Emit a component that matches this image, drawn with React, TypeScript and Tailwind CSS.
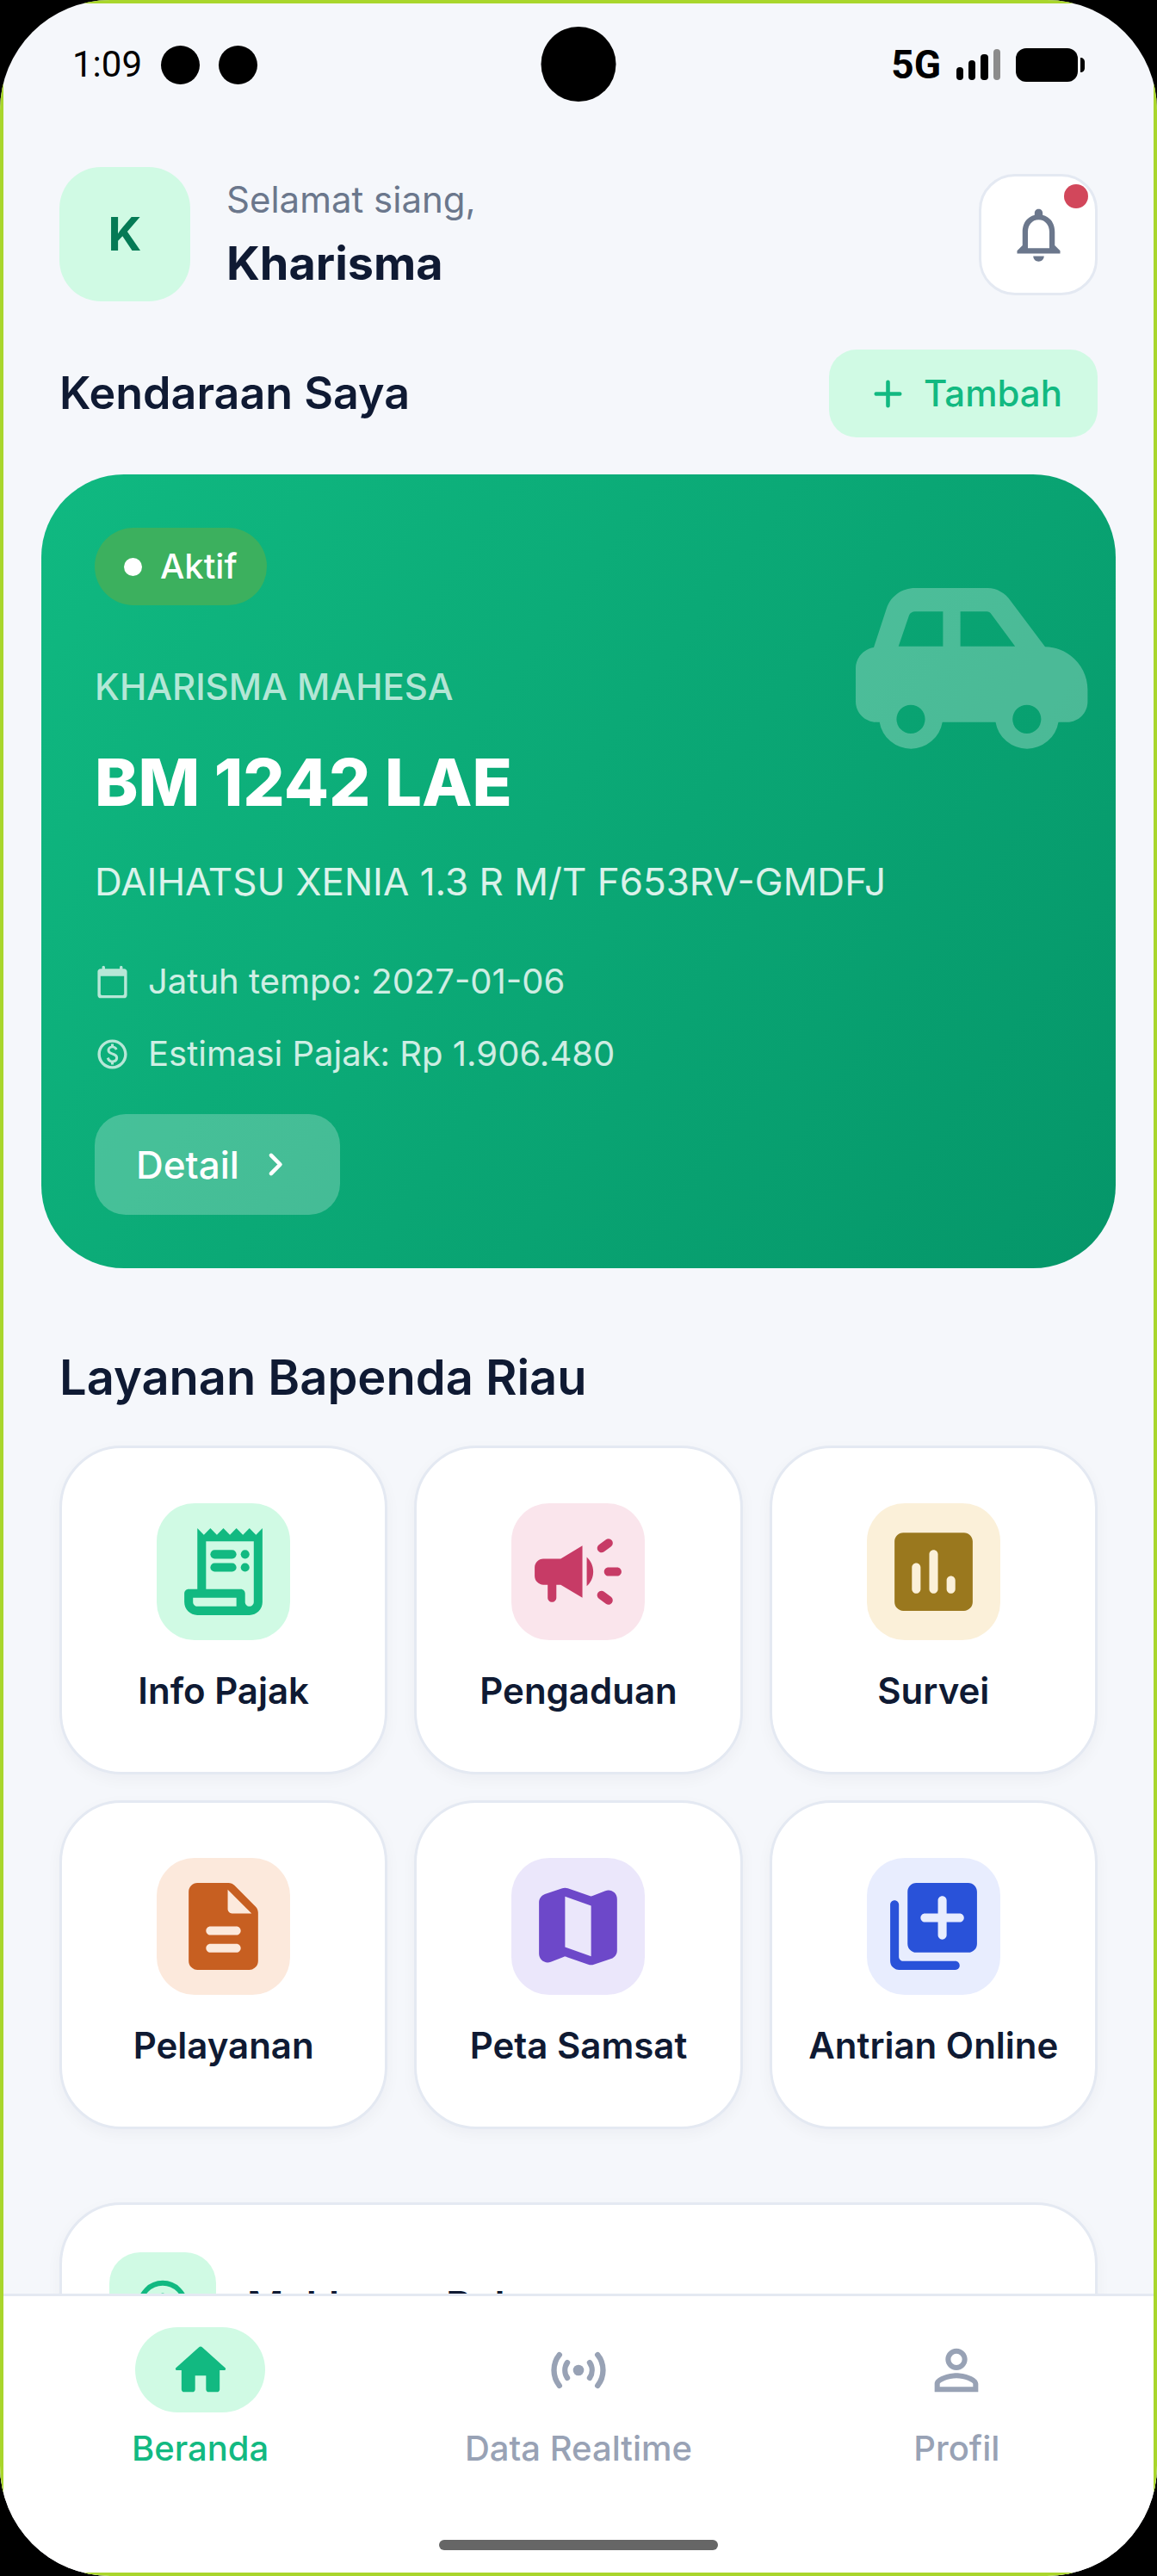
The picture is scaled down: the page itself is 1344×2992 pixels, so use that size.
import React from 'react';
import { MdNotificationsNone, MdOutlinePaid, MdPersonOutline } from 'react-icons/md';

type IconProps = { className?: string };

const ReceiptIcon: React.FC<IconProps> = ({ className }) => (
    <svg viewBox="0 0 24 24" fill="currentColor" className={className} aria-hidden="true">
        <path d="M19.5 3.5L18 2l-1.5 1.5L15 2l-1.5 1.5L12 2l-1.5 1.5L9 2 7.5 3.5 6 2v14H4c-.55 0-1 .45-1 1v2c0 1.66 1.34 3 3 3h12c1.66 0 3-1.34 3-3V2l-1.5 1.5zM15 20H6c-.55 0-1-.45-1-1v-1h10v2zm4-1c0 .55-.45 1-1 1s-1-.45-1-1v-2c0-.55-.45-1-1-1H8V5h11v14z" />
        <rect x="9" y="7" width="6" height="2" rx="1" />
        <rect x="9" y="10" width="6" height="2" rx="1" />
        <circle cx="17" cy="8" r="1" />
        <circle cx="17" cy="11" r="1" />
    </svg>
);

const CampaignIcon: React.FC<IconProps> = ({ className }) => (
    <svg viewBox="0 0 24 24" fill="currentColor" className={className} aria-hidden="true">
        <path d="M18 12c0 .55.45 1 1 1h2c.55 0 1-.45 1-1s-.45-1-1-1h-2c-.55 0-1 .45-1 1zM16.59 16.82c-.33.44-.24 1.05.2 1.37.53.39 1.09.81 1.62 1.21.44.33 1.06.24 1.38-.2 0-.01.01-.01.01-.02.33-.44.24-1.06-.2-1.38-.53-.4-1.09-.82-1.61-1.21-.44-.33-1.06-.23-1.39.21 0 .01-.01.02-.01.02zM19.81 4.81c0-.01-.01-.01-.01-.02-.33-.44-.95-.53-1.38-.2-.53.4-1.1.82-1.62 1.22-.44.33-.52.95-.19 1.38 0 .01.01.01.01.02.33.44.94.53 1.38.2.53-.39 1.09-.82 1.62-1.22.43-.32.51-.94.19-1.38zM8 9H4c-1.1 0-2 .9-2 2v2c0 1.1.9 2 2 2h1v3c0 .55.45 1 1 1s1-.45 1-1v-3h1l5 3V6L8 9zM15.5 12c0-1.33-.58-2.53-1.5-3.35v6.69c.92-.81 1.5-2.01 1.5-3.34z" />
    </svg>
);

const SurveyIcon: React.FC<IconProps> = ({ className }) => (
    <svg viewBox="0 0 24 24" fill="currentColor" className={className} aria-hidden="true">
        <path d="M19 3H5c-1.1 0-2 .9-2 2v14c0 1.1.9 2 2 2h14c1.1 0 2-.9 2-2V5c0-1.1-.9-2-2-2zM8 17c-.55 0-1-.45-1-1v-5c0-.55.45-1 1-1s1 .45 1 1v5c0 .55-.45 1-1 1zm4 0c-.55 0-1-.45-1-1V8c0-.55.45-1 1-1s1 .45 1 1v8c0 .55-.45 1-1 1zm4 0c-.55 0-1-.45-1-1v-2c0-.55.45-1 1-1s1 .45 1 1v2c0 .55-.45 1-1 1z" />
    </svg>
);

const DocumentIcon: React.FC<IconProps> = ({ className }) => (
    <svg viewBox="0 0 24 24" fill="currentColor" className={className} aria-hidden="true">
        <path d="M14.59 2.59c-.38-.38-.89-.59-1.42-.59H6c-1.1 0-2 .9-2 2v16c0 1.1.89 2 1.99 2H18c1.1 0 2-.9 2-2V8.83c0-.53-.21-1.04-.59-1.41l-4.82-4.83zM15 18H9c-.55 0-1-.45-1-1s.45-1 1-1h6c.55 0 1 .45 1 1s-.45 1-1 1zm0-4H9c-.55 0-1-.45-1-1s.45-1 1-1h6c.55 0 1 .45 1 1s-.45 1-1 1zm-2-6V3.5L18.5 9H14c-.55 0-1-.45-1-1z" />
    </svg>
);

const MapIcon: React.FC<IconProps> = ({ className }) => (
    <svg viewBox="0 0 24 24" fill="currentColor" className={className} aria-hidden="true">
        <path d="M14.65 4.98l-5-1.75c-.42-.15-.88-.15-1.3-.01L4.36 4.56C3.55 4.84 3 5.6 3 6.46v11.85c0 1.41 1.41 2.37 2.72 1.86l2.93-1.14c.22-.09.47-.09.69-.01l5 1.75c.42.15.88.15 1.3.01l3.99-1.34c.81-.27 1.36-1.04 1.36-1.9V5.69c0-1.41-1.41-2.37-2.72-1.86l-2.93 1.14c-.22.08-.46.09-.69.01zM15 18.89l-6-2.11V5.11l6 2.11v11.67z" />
    </svg>
);

const QueueIcon: React.FC<IconProps> = ({ className }) => (
    <svg viewBox="0 0 24 24" fill="currentColor" className={className} aria-hidden="true">
        <path d="M3 6c-.55 0-1 .45-1 1v13c0 1.1.9 2 2 2h13c.55 0 1-.45 1-1s-.45-1-1-1H5c-.55 0-1-.45-1-1V7c0-.55-.45-1-1-1zm17-4H8c-1.1 0-2 .9-2 2v12c0 1.1.9 2 2 2h12c1.1 0 2-.9 2-2V4c0-1.1-.9-2-2-2zm-2 9h-3v3c0 .55-.45 1-1 1s-1-.45-1-1v-3h-3c-.55 0-1-.45-1-1s.45-1 1-1h3V6c0-.55.45-1 1-1s1 .45 1 1v3h3c.55 0 1 .45 1 1s-.45 1-1 1z" />
    </svg>
);

const HomeIcon: React.FC<IconProps> = ({ className }) => (
    <svg viewBox="0 0 24 24" fill="currentColor" className={className} aria-hidden="true">
        <path d="M10 19v-5h4v5c0 .55.45 1 1 1h3c.55 0 1-.45 1-1v-7h1.7c.46 0 .68-.57.33-.87L12.67 3.6c-.38-.34-.96-.34-1.34 0l-8.36 7.53c-.34.3-.13.87.33.87H5v7c0 .55.45 1 1 1h3c.55 0 1-.45 1-1z" />
    </svg>
);

const SensorsIcon: React.FC<IconProps> = ({ className }) => (
    <svg viewBox="0 0 24 24" fill="none" stroke="currentColor" strokeWidth="2" strokeLinecap="round" className={className} aria-hidden="true">
        <circle cx="12" cy="12" r="2" fill="currentColor" stroke="none" />
        <path d="M7.9 9.2a5 5 0 0 0 0 5.6M16.1 9.2a5 5 0 0 1 0 5.6M5 6.35a9 9 0 0 0 0 11.3M19 6.35a9 9 0 0 1 0 11.3" />
    </svg>
);

const CalendarIcon: React.FC<IconProps> = ({ className }) => (
    <svg viewBox="0 0 24 24" fill="currentColor" className={className} aria-hidden="true">
        <path d="M20 3h-1V2c0-.55-.45-1-1-1s-1 .45-1 1v1H7V2c0-.55-.45-1-1-1s-1 .45-1 1v1H4c-1.1 0-2 .9-2 2v16c0 1.1.9 2 2 2h16c1.1 0 2-.9 2-2V5c0-1.1-.9-2-2-2zm-1 18H5c-.55 0-1-.45-1-1V8h16v12c0 .55-.45 1-1 1z" />
    </svg>
);

const CarIcon: React.FC<IconProps> = ({ className }) => (
    <svg viewBox="0 0 270 190" fill="currentColor" fillRule="evenodd" className={className} aria-hidden="true">
        <path d="M69 0H153C164 0 174 6 180 15L220 68.3C247 68.3 269.4 91 269.4 118V131.7C269.4 145 259 155.7 245.6 155.7H235.5A37 37 0 0 1 162.5 155.7H100.7A37 37 0 0 1 27.7 155.7H24C11 155.7 0 145 0 131.7V93.3C0 81 9 71 21 69L36 23.3C41 9 54 0 69 0ZM49.7 67.7H101.4V27.3H69C66 27.3 63 29 62 31.7ZM121.6 27.3V67.7H185.2L157.3 30C156 28.3 154.5 27.3 152.4 27.3ZM47.4 152.3A16.6 16.6 0 1 0 80.6 152.3A16.6 16.6 0 1 0 47.4 152.3ZM182.2 152.3A16.6 16.6 0 1 0 215.4 152.3A16.6 16.6 0 1 0 182.2 152.3Z" />
    </svg>
);

const services = [
    { label: 'Info Pajak', Icon: ReceiptIcon, tile: 'bg-[#d0fae4] text-[#12b981]' },
    { label: 'Pengaduan', Icon: CampaignIcon, tile: 'bg-[#fae5ec] text-[#c73b66]' },
    { label: 'Survei', Icon: SurveyIcon, tile: 'bg-[#fbf0d9] text-[#9a781e]' },
    { label: 'Pelayanan', Icon: DocumentIcon, tile: 'bg-[#fce9dc] text-[#c75f21]' },
    { label: 'Peta Samsat', Icon: MapIcon, tile: 'bg-[#ebe7fb] text-[#6d48c9]' },
    { label: 'Antrian Online', Icon: QueueIcon, tile: 'bg-[#e8edfe] text-[#2952d9]' },
];

const navItems = [
    { label: 'Beranda', Icon: HomeIcon, active: true },
    { label: 'Data Realtime', Icon: SensorsIcon, active: false },
    { label: 'Profil', Icon: MdPersonOutline, active: false },
];

const StatusBar: React.FC = () => (
    <div className="relative flex h-[150px] shrink-0 items-center justify-between px-[84px] text-black">
        <div className="flex items-center gap-[22px]">
            <span className="font-[Roboto,sans-serif] text-[42px] leading-[48px]">1:09</span>
            <span className="size-[45px] rounded-full bg-black" />
            <span className="size-[45px] rounded-full bg-black" />
        </div>
        <span className="absolute left-1/2 top-[31px] size-[87px] -translate-x-1/2 rounded-full bg-black" />
        <div className="flex items-center gap-[18px]">
            <span className="font-['Liberation_Sans_Narrow',Roboto,sans-serif] text-[46px] font-bold leading-[48px]">5G</span>
            <svg viewBox="0 0 51 36" className="h-[36px] w-[51px]" aria-hidden="true">
                <rect x="0" y="21" width="8" height="15" rx="4" />
                <rect x="14" y="13" width="8" height="23" rx="4" />
                <rect x="28" y="6" width="9" height="30" rx="4" />
                <rect x="43" y="0" width="8" height="36" rx="4" fill="#8c8c8c" />
            </svg>
            <svg viewBox="0 0 80 39" className="h-[39px] w-[80px]" aria-hidden="true">
                <rect width="72" height="39" rx="12" />
                <path d="M75 11c3 0 5 2 5 5v7c0 3-2 5-5 5z" />
            </svg>
        </div>
    </div>
);

const VehicleCard: React.FC = () => (
    <article className="relative -mx-[21px] mt-[43px] flex flex-col items-start rounded-[96px] bg-[linear-gradient(126deg,#10b981,#059669)] p-[62px] text-white">
        <CarIcon className="absolute right-8 top-[132px] h-[190px] w-[270px] text-white/27" />
        <span className="flex h-[90px] items-center gap-[21px] rounded-full bg-[#3cb05e] px-[34px] text-[40px] font-medium leading-[48px]">
            <span className="size-[21px] rounded-full bg-white" />
            Aktif
        </span>
        <p className="mt-[65px] text-[42px] font-medium leading-[60px] text-white/70">KHARISMA MAHESA</p>
        <h3 className="mt-8 text-[76px] font-extrabold leading-[96px]">BM 1242 LAE</h3>
        <p className="mt-9 text-[44px] leading-[64px] text-white/85">DAIHATSU XENIA 1.3 R M/T F653RV-GMDFJ</p>
        <p className="mt-14 flex items-center gap-[21px] text-[40px] leading-[56px] text-white/80">
            <CalendarIcon className="size-[41px] text-white/70" />
            Jatuh tempo: 2027-01-06
        </p>
        <p className="mt-7 flex items-center gap-[21px] text-[40px] leading-[56px] text-white/80">
            <MdOutlinePaid className="size-[41px] text-white/70" />
            Estimasi Pajak: Rp 1.906.480
        </p>
        <button type="button" className="mt-[42px] flex h-[117px] items-center gap-[14px] rounded-[36px] bg-white/24 px-12 text-[44px] font-medium leading-[56px]">
            Detail
            <svg viewBox="0 0 24 24" fill="none" stroke="currentColor" strokeWidth="2" strokeLinecap="round" strokeLinejoin="round" className="size-[55px]" aria-hidden="true">
                <path d="M10 7.4L14.6 12L10 16.6" />
            </svg>
        </button>
    </article>
);

const App: React.FC = () => {
    return (
        <div className="h-screen bg-black">
            <div className="relative flex h-full flex-col overflow-hidden rounded-[128px] bg-[#f5f7fb] font-[Inter,sans-serif] text-[#0f1a33]">
                <StatusBar />
                <main className="min-h-0 flex-1 overflow-y-auto px-[69px] pt-11 [scrollbar-width:none]">
                    <header className="flex items-center">
                        <div className="flex h-[156px] w-[152px] items-center justify-center rounded-[48px] bg-[#d0fae4] text-[54px] font-bold leading-[72px] text-[#057a55]">K</div>
                        <div className="ml-[42px] flex-1">
                            <p className="text-[42px] leading-[60px] text-[#6b778c]">Selamat siang,</p>
                            <p className="mt-2 text-[54px] font-bold leading-[72px]">Kharisma</p>
                        </div>
                        <button type="button" aria-label="Notifikasi" className="relative flex h-[141px] w-[138px] items-center justify-center rounded-[42px] border-3 border-[#e4e9f2] bg-white text-[#6b778c]">
                            <MdNotificationsNone className="size-[75px]" />
                            <span className="absolute right-2 top-[9px] size-7 rounded-full bg-[#d2475b]" />
                        </button>
                    </header>

                    <section className="mt-14">
                        <div className="flex items-center justify-between">
                            <h2 className="text-[52px] font-semibold leading-[72px]">Kendaraan Saya</h2>
                            <button type="button" className="flex h-[102px] items-center gap-[14px] rounded-[32px] bg-[#d0fae4] px-[41px] text-[42px] font-medium leading-[56px] text-[#12b981]">
                                <svg viewBox="0 0 24 24" fill="none" stroke="currentColor" strokeWidth="2" strokeLinecap="round" className="size-[55px]" aria-hidden="true">
                                    <path d="M12 6v12M6 12h12" />
                                </svg>
                                Tambah
                            </button>
                        </div>
                        <VehicleCard />
                    </section>

                    <section className="mt-[91px]">
                        <h2 className="text-[56px] font-semibold leading-[72px]">Layanan Bapenda Riau</h2>
                        <div className="mt-[43px] grid grid-cols-3 gap-x-[31px] gap-y-[30px]">
                            {services.map(({ label, Icon, tile }) => (
                                <a key={label} href="#" className="flex flex-col items-center rounded-[72px] border-3 border-[#e4e9f2] bg-white pb-[66px] pt-16 shadow-[0_6px_18px_rgba(15,26,51,0.04)]">
                                    <span className={`flex h-[159px] w-[155px] items-center justify-center rounded-[44px] ${tile}`}>
                                        <Icon className="size-[121px]" />
                                    </span>
                                    <span className="mt-[31px] text-[42px] font-semibold leading-[56px]">{label}</span>
                                </a>
                            ))}
                        </div>
                    </section>

                    <section className="mt-[85px] flex items-center gap-9 rounded-[72px] border-3 border-[#e4e9f2] bg-white p-[55px] shadow-[0_6px_18px_rgba(15,26,51,0.04)]">
                        <span className="flex size-[124px] items-center justify-center rounded-[36px] bg-[#d0fae4] text-[#12b981]">
                            <svg viewBox="0 0 24 24" fill="none" stroke="currentColor" strokeWidth="2" strokeLinecap="round" className="size-[70px]" aria-hidden="true">
                                <circle cx="12" cy="12" r="9" />
                                <path d="M12 11v5M12 8v0" />
                            </svg>
                        </span>
                        <h2 className="text-[46px] font-semibold leading-[60px]">Maklumat Pelayanan</h2>
                    </section>
                </main>

                <nav className="shrink-0 border-t-3 border-[#e4e9f2] bg-white px-[13px] pb-[30px] pt-9">
                    <div className="grid grid-cols-3">
                        {navItems.map(({ label, Icon, active }) => (
                            <a key={label} href="#" className={`flex flex-col items-center ${active ? 'text-[#12b981]' : 'text-[#98a2b5]'}`}>
                                <span className={`flex h-[99px] w-[151px] items-center justify-center rounded-full ${active ? 'bg-[#d0fae4]' : ''}`}>
                                    <Icon className="size-[76px]" />
                                </span>
                                <span className="mt-[18px] text-[40px] font-medium leading-[48px]">{label}</span>
                            </a>
                        ))}
                    </div>
                    <div className="mx-auto mt-[82px] h-3 w-[324px] rounded-full bg-[#666666]" />
                </nav>

                {/* thin frame line, clipped by the rounded corners */}
                <div className="pointer-events-none absolute inset-0 border-4 border-[#a9d62c]" />
            </div>
        </div>
    );
};

export default App;
